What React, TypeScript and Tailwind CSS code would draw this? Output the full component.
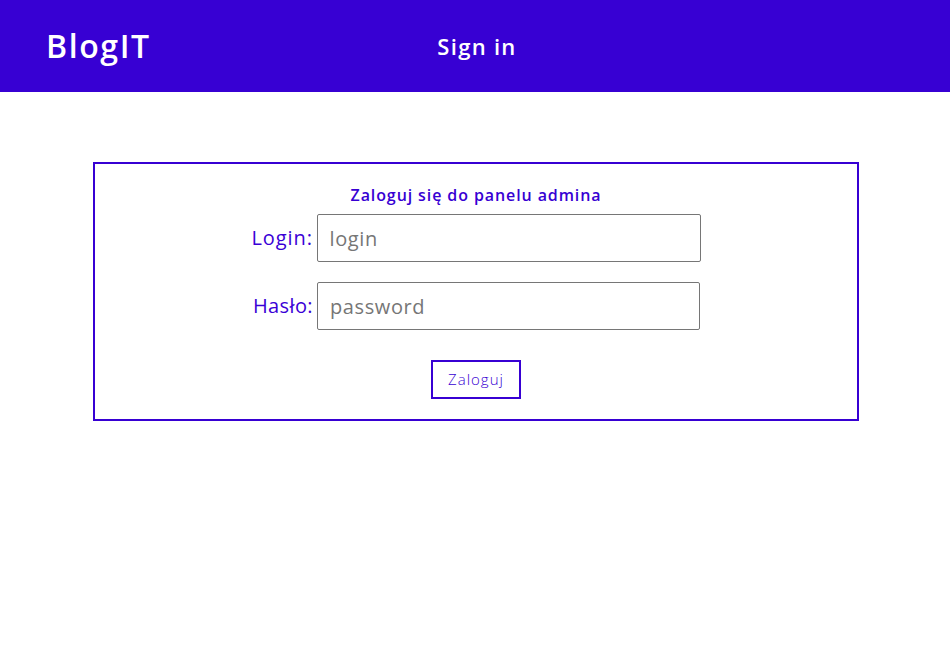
import React from "react";

export default function App() {
  return (
    <div className="min-h-[658px] bg-white" style={{ fontFamily: '"Open Sans", "Noto Sans", sans-serif' }}>
      <header className="grid h-[92px] grid-cols-3 items-center bg-[#3700d3] text-white">
        <div className="pl-[46px] text-[32px] font-semibold leading-none tracking-[1.6px]">BlogIT</div>
        <div className="pl-[4px] text-center text-[22px] font-semibold leading-none tracking-[1.3px]">Sign in</div>
        <div />
      </header>
      <main className="ml-[93px] mt-[70px] w-[766px] border-2 border-[#3700d3] pb-[20px] pt-[19px]">
        <h1 className="text-center text-[16px] font-semibold leading-[24px] tracking-[0.9px] text-[#3700d3]">
          Zaloguj się do panelu admina
        </h1>
        <div className="mt-[7px] flex items-center justify-center gap-[4px]">
          <label className="w-[61px] text-right text-[20px] tracking-[0.9px] text-[#3a00d6]">Login:</label>
          <input
            className="h-[48px] w-[384px] rounded-[2px] border border-[#767676] px-[12px] text-[20px] tracking-[0.6px] outline-none placeholder:text-[#767676]"
            placeholder="login"
          />
        </div>
        <div className="mt-[20px] flex items-center justify-center gap-[4px]">
          <label className="w-[61px] text-right text-[20px] tracking-[0.4px] text-[#3a00d6]">Hasło:</label>
          <input
            type="password"
            className="h-[48px] w-[383px] rounded-[2px] border border-[#767676] px-[12px] text-[20px] tracking-[0.6px] outline-none placeholder:text-[#767676]"
            placeholder="password"
          />
        </div>
        <div className="mt-[30px] flex justify-center">
          <button className="h-[39px] w-[90px] border-2 border-[#3700d3] bg-white text-[15px] font-light tracking-[1px] text-[#3700d3]">
            Zaloguj
          </button>
        </div>
      </main>
    </div>
  );
}
